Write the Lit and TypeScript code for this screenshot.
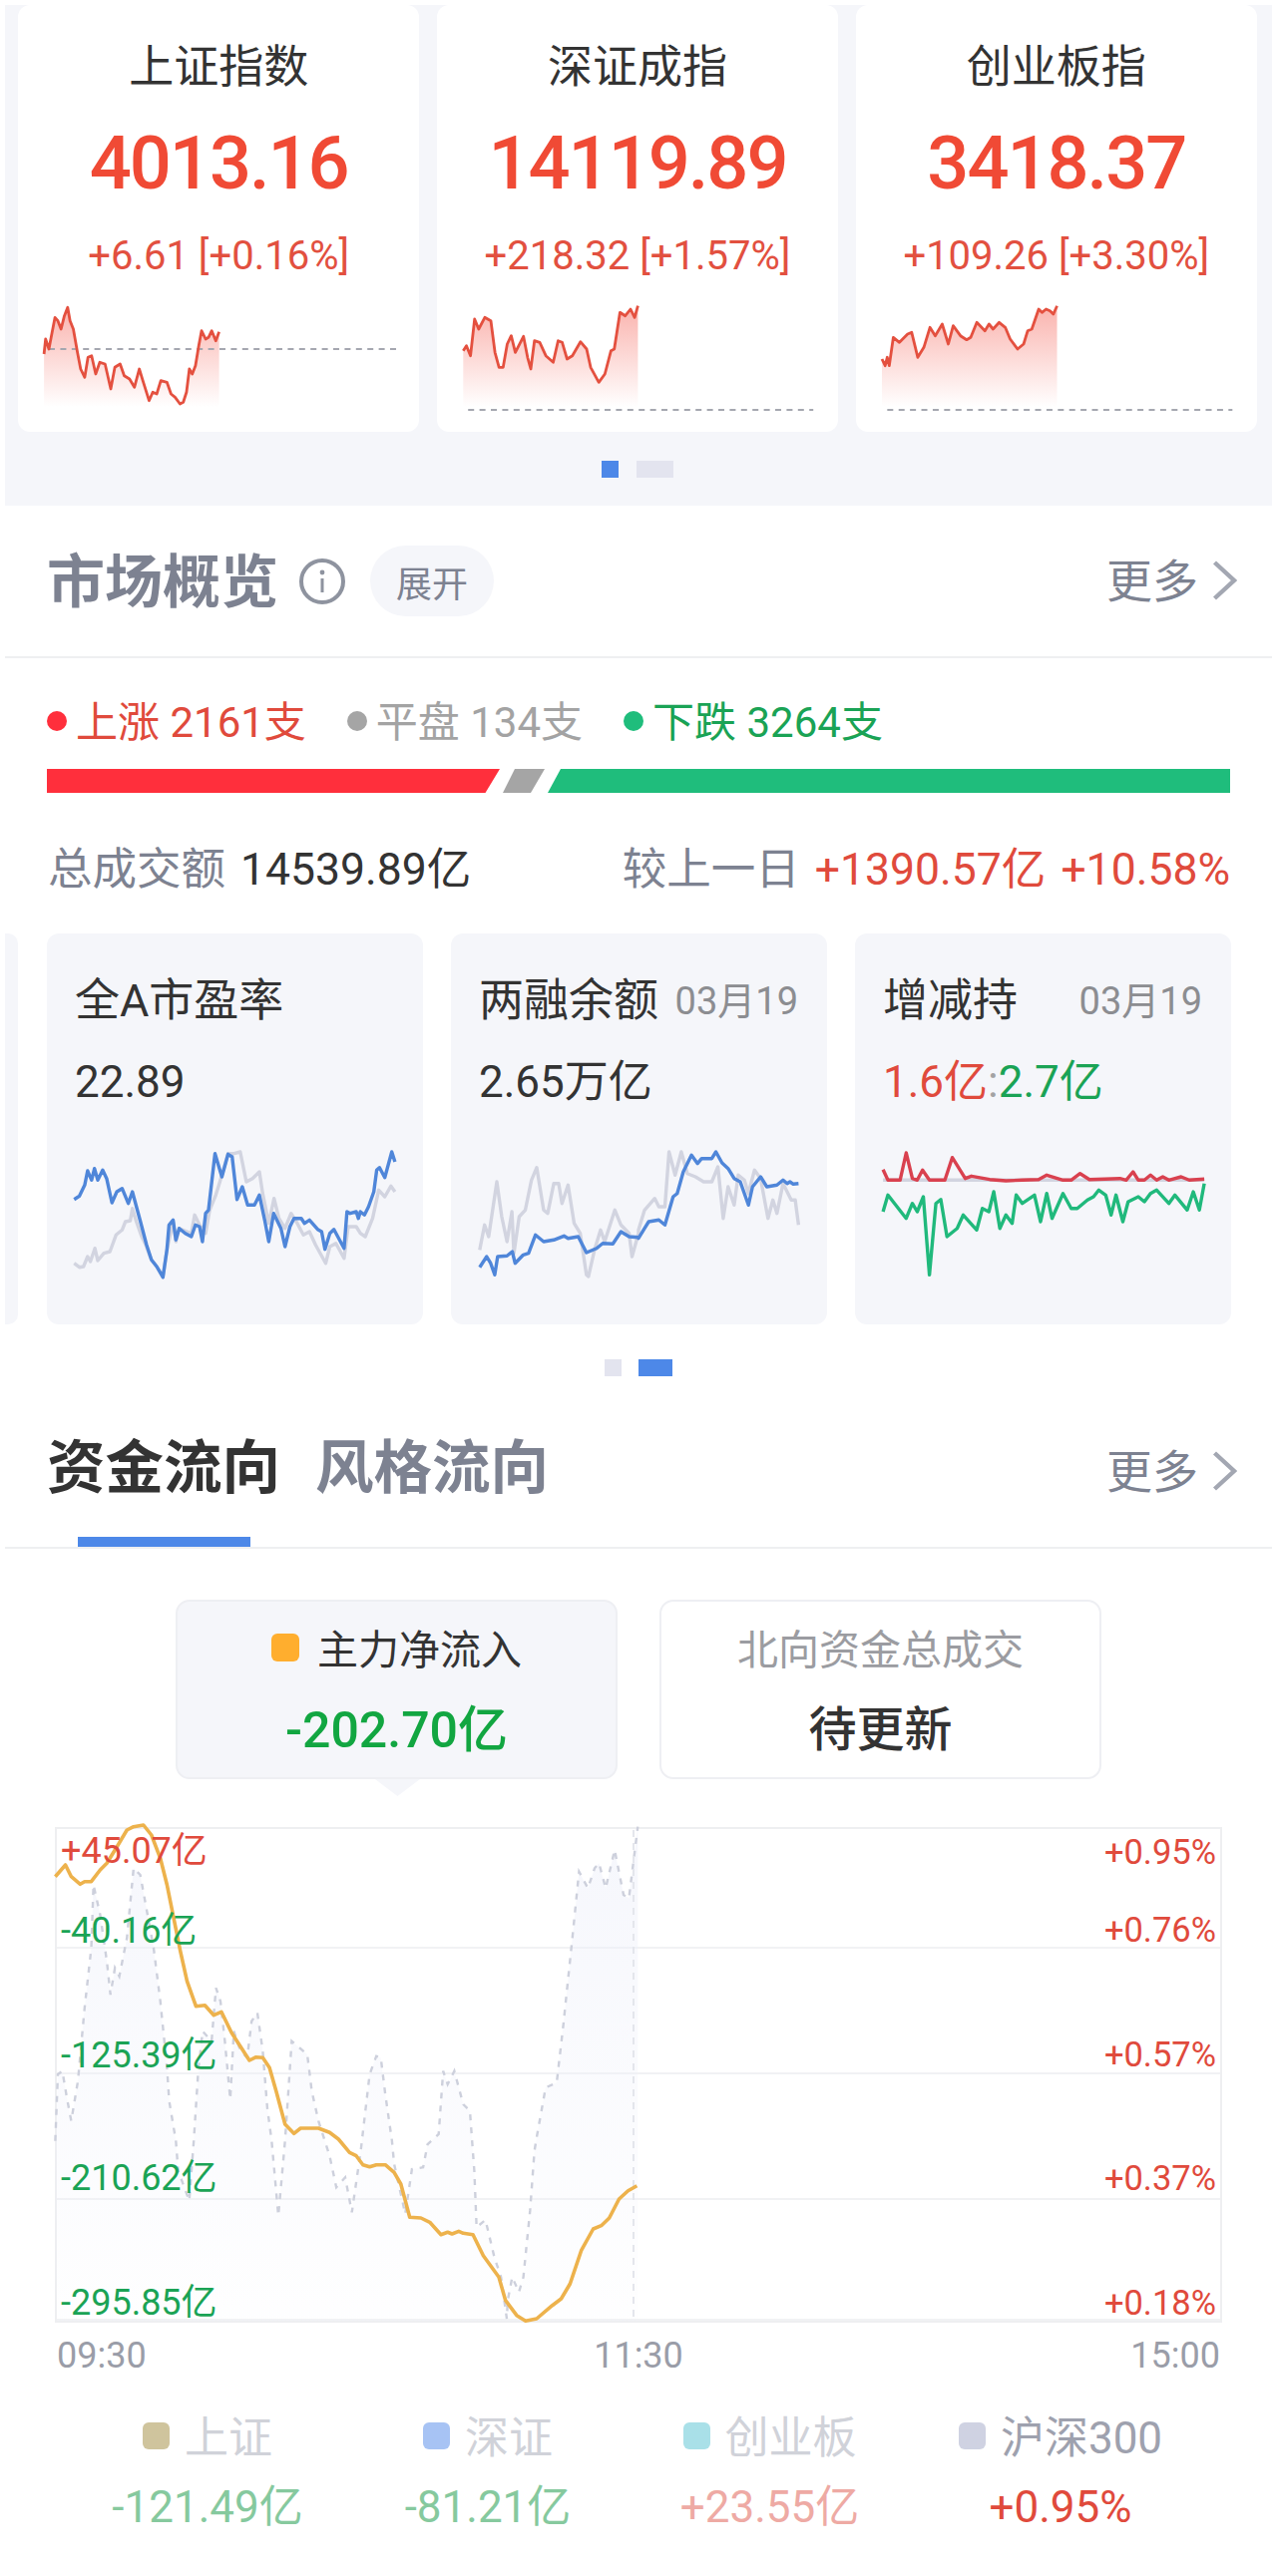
import { LitElement, html, css, svg } from "lit";
import { customElement } from "lit/decorators.js";

type P = [number, number];
const conv = (a: number[], sx: number, ox: number, sy: number, oy: number): P[] => {
  const r: P[] = [];
  for (let i = 0; i < a.length; i += 2) r.push([ox + a[i] / sx, oy + a[i + 1] / sy]);
  return r;
};
const str = (p: P[]) => p.map(([x, y]) => `${x.toFixed(1)},${y.toFixed(1)}`).join(" ");
const area = (p: P[], base: number) =>
  `${p[0][0].toFixed(1)},${base} ${str(p)} ${p[p.length - 1][0].toFixed(1)},${base}`;

const z = 1568 / 640;
const s1 = conv([108,1065,112,1020,120,1050,128,1000,135,955,142,965,150,990,158,950,166,925,172,965,180,990,190,1060,198,1110,208,1135,216,1075,225,1070,235,1125,245,1090,258,1095,272,1170,282,1105,295,1095,305,1130,318,1140,330,1165,342,1110,352,1150,366,1205,375,1180,385,1185,395,1145,410,1150,420,1185,430,1195,442,1215,450,1210,458,1180,465,1110,472,1125,480,1100,488,1040,495,995,505,1020,512,1015,520,995,530,1025,538,998], z, 0, 3, 0);
const s2 = conv([1137,1055,1145,1040,1155,1070,1165,960,1175,990,1190,955,1205,965,1215,1060,1225,1105,1235,1105,1245,1035,1255,1010,1265,1060,1285,1012,1295,1075,1303,1110,1312,1025,1325,1030,1340,1070,1358,1090,1370,1025,1380,1030,1392,1080,1405,1070,1425,1028,1440,1050,1450,1105,1470,1150,1485,1125,1500,1055,1508,1050,1522,940,1535,950,1548,930,1558,955,1566,920], z, 0, 3, 0);
const s3 = conv([597,1080,605,1100,610,1075,615,1100,625,1015,640,1030,660,1005,670,1000,685,1075,700,1045,715,985,728,1010,745,975,760,1035,772,980,790,1010,805,1022,815,1015,830,970,850,995,860,975,870,990,885,970,900,985,912,1020,930,1050,945,1035,955,995,965,990,982,930,990,940,1000,930,1010,935,1018,945,1027,920], z, 640, 3, 0);

const c1b = conv([182,848,195,838,208,805,215,762,225,790,232,755,240,790,252,760,262,785,275,858,287,825,300,815,315,860,325,825,345,915,360,985,372,1030,385,1050,400,1082,410,1000,415,925,425,910,432,970,440,935,455,950,470,960,480,925,490,930,497,975,505,890,512,880,528,710,545,780,560,712,570,720,582,848,595,810,608,865,625,865,637,835,650,910,660,975,672,890,690,935,700,990,712,930,722,905,740,905,748,920,760,910,780,938,790,945,798,998,810,950,820,938,845,995,852,885,860,890,875,885,880,905,885,885,895,895,905,870,918,825,925,760,932,752,945,782,962,705,970,735], z, 0, 3, 920);
const c1g = conv([182,1040,195,1052,205,1050,215,1020,222,1035,233,995,240,1032,255,1010,270,1005,285,955,300,940,308,915,320,912,325,875,335,915,348,960,358,985,372,1030,385,1050,400,1082,410,1000,425,915,432,975,440,935,470,950,478,895,490,925,505,950,515,880,530,835,540,795,560,710,575,710,590,705,605,795,620,785,637,765,645,830,660,920,673,845,685,905,700,935,715,890,730,920,745,955,760,945,775,985,800,1040,810,990,825,980,845,1025,855,930,875,930,885,950,897,960,915,905,930,820,945,840,960,808,970,825], z, 0, 3, 920);
const c2b = [...conv([1178,1052,1195,1020,1205,1040,1215,1075,1222,1020,1245,1018,1258,1005,1265,1040,1285,1015,1298,1010,1315,955,1335,975,1360,970,1385,958,1395,965,1420,960,1440,1008,1465,995,1480,980,1505,982,1525,945,1545,960,1568,962], z, 0, 3, 920),
  ...conv([0,965,15,935,25,915,50,910,65,925,85,840,95,830,110,765,130,715,145,740,155,725,180,725,190,705,205,738,220,755,235,785,250,795,270,865,280,810,300,780,315,810,340,805,355,790,365,800,372,795,380,802,393,800], z, 640, 3, 920)];
const c2g = [...conv([1178,1000,1190,925,1200,960,1220,795,1232,900,1245,975,1257,885,1262,1010,1275,900,1290,880,1305,790,1318,752,1335,880,1345,890,1360,800,1372,800,1380,860,1395,805,1410,920,1425,950,1440,1075,1445,1080,1460,1000,1475,940,1485,975,1510,880,1525,925,1545,950,1552,1020,1568,950], z, 0, 3, 920),
  ...conv([0,940,15,880,40,845,50,870,65,870,75,705,90,775,105,705,120,770,140,780,160,795,180,795,195,750,208,905,220,810,235,865,245,775,260,790,270,830,285,760,300,785,318,905,330,850,340,890,355,800,375,850,385,850,393,925], z, 640, 3, 920)];
const c3r = conv([598,758,610,790,640,790,655,708,670,785,682,790,695,760,712,790,750,790,768,722,800,785,815,778,860,788,900,792,940,790,980,788,1000,775,1040,790,1060,790,1082,770,1105,788,1180,785,1195,790,1212,765,1225,790,1240,790,1255,775,1270,790,1285,780,1300,790,1330,780,1350,790,1387,787], z, 640, 3, 920);
const c3y = conv([598,885,610,835,655,905,670,860,682,885,697,840,712,1075,728,860,740,848,755,960,780,935,795,895,828,940,842,875,858,885,870,825,885,935,900,895,915,920,925,835,940,860,970,835,985,915,1000,830,1013,905,1040,830,1060,875,1075,875,1100,850,1115,840,1128,820,1145,835,1158,895,1170,835,1187,915,1200,855,1225,840,1240,855,1255,830,1270,820,1300,860,1315,835,1345,880,1360,825,1375,880,1387,800], z, 640, 3, 920);
const c3f = conv([598,790,1387,790], z, 640, 3, 920);

const y7 = 1568 / 700;
const a = (arr: number[]) => conv(arr, y7, 0, 3, 1780);
const b = (arr: number[]) => conv(arr, y7, 0, 3, 2150);
const orange = [...a([124,305,147,270,160,305,180,328,190,320,205,320,225,285,240,265,265,210,285,165,300,155,322,150,340,180,360,250,375,330,390,430,405,530,420,620,440,695,460,692,480,722,497,712,520,775,560,858,575,848,590,850,605,880,620,950,640,1050,660,1078,675,1062,715,1062,740,1075,760,1095,785,1135,800,1145,815,1172,830,1178,845,1172,865,1172,885,1195]),
  ...b([900,120,920,220,945,222,965,235,990,272,1005,265,1015,270,1030,262,1040,268,1062,272,1085,335,1120,400,1135,470,1160,515,1180,532,1205,525,1240,485,1260,465,1280,420,1305,320,1332,255,1350,245,1368,222,1390,165,1410,140,1430,125])];
const dashed = [...a([124,1100,130,900,140,890,150,970,160,1040,175,920,190,700,205,520,210,330,225,420,240,560,248,660,258,580,268,605,285,490,300,280,315,300,345,520,360,680,375,880,380,980,395,1100,400,1190]),
  ...b([425,170]),
  ...a([435,1100,445,890,455,770,475,800,485,640,495,680,505,800,517,975,525,770,540,830,555,850,565,740,578,715,590,830,600,1000,610,1100]),
  ...b([625,215]),
  ...a([640,1100,655,800,690,840,700,950,715,1040,740,1145]),
  ...b([755,130,775,100,790,205,810,20]),
  ...a([830,900,845,845,855,850,865,960,880,1100]),
  ...b([885,60,910,210,925,75,950,70,960,0]),
  ...a([985,1080,995,890,1005,930,1020,890,1040,990,1055,1010,1065,1190]),
  ...b([1070,250,1090,228,1110,340,1125,400,1138,525,1140,470,1150,400,1165,445,1175,400,1190,200,1200,20]),
  ...a([1205,1090,1225,940,1250,925,1265,750,1285,490,1300,290,1320,340,1335,280,1345,265,1360,340,1380,225,1400,360,1412,370,1432,155])];

const indices = [
  { name: "上证指数", val: "4013.16", delta: "+6.61 [+0.16%]", pts: s1, x: 18, dash: [49, 397, 350] },
  { name: "深证成指", val: "14119.89", delta: "+218.32 [+1.57%]", pts: s2, x: 437.8, dash: [469, 815, 411] },
  { name: "创业板指", val: "3418.37", delta: "+109.26 [+3.30%]", pts: s3, x: 857.7, dash: [889, 1235, 411] },
];
const leftLabels = [
  { t: "+45.07亿", y: 1855, c: "up" }, { t: "-40.16亿", y: 1935, c: "down" }, { t: "-125.39亿", y: 2060, c: "down" },
  { t: "-210.62亿", y: 2183, c: "down" }, { t: "-295.85亿", y: 2308, c: "down" },
];
const rightLabels = [
  { t: "+0.95%", y: 1856 }, { t: "+0.76%", y: 1934 }, { t: "+0.57%", y: 2059 }, { t: "+0.37%", y: 2183 }, { t: "+0.18%", y: 2308 },
];
const legend = [
  { n: "上证", v: "-121.49亿", sw: "#cfc49d", nc: "dim", vc: "dgreen" },
  { n: "深证", v: "-81.21亿", sw: "#a7c3f4", nc: "dim", vc: "dgreen" },
  { n: "创业板", v: "+23.55亿", sw: "#a9e0e8", nc: "dim", vc: "dred" },
  { n: "沪深300", v: "+0.95%", sw: "#cfd2e2", nc: "act", vc: "up" },
];

const chevron = html`<svg class="chev" viewBox="0 0 25 40"><path d="M2.5 2 L22 20 L2.5 38" fill="none" stroke="#a3a7b2" stroke-width="4.4"/></svg>`;

@customElement("app-root")
export class AppRoot extends LitElement {
  static styles = css`
    :host { display: block; width: 1280px; height: 2583px; background: #fff; overflow: hidden;
      font-family: Roboto, "Noto Sans CJK SC", sans-serif; color: #333; }
    svg { display: block; }
    .top { margin: 5px 5px 0; height: 502px; background: #f5f6fa; padding: 0 15px 0 13px; box-sizing: border-box; }
    .cards { display: grid; grid-template-columns: repeat(3, 1fr); gap: 17.5px; }
    .card { background: #fff; border-radius: 12px; height: 428px; display: flex; flex-direction: column; align-items: center; }
    .cname { margin-top: 33px; font-size: 45px; line-height: 60px; color: #333; }
    .cval { margin-top: 26px; font-size: 74px; line-height: 80px; font-weight: 500; letter-spacing: -2px; color: #f04a35; }
    .cdelta { margin-top: 28px; font-size: 40px; line-height: 50px; color: #e2503f; }
    .spark { margin-top: 18px; width: 100%; height: 120px; }
    .dots { display: flex; justify-content: center; gap: 18px; }
    .dots i { display: block; height: 17px; }
    .dots-top { margin-top: 29px; }
    .on1 { width: 17px; background: #4d88e8; }
    .off2 { width: 37px; background: #e3e4ef; }
    .off1 { width: 17px; background: #e3e4ef; }
    .on2 { width: 34px; background: #4d88e8; }
    .head { margin: 0 5px; height: 153px; box-sizing: border-box; padding: 0 35px 0 42px; display: flex; align-items: center; border-bottom: 2px solid #eeeff1; }
    .h-title { font-size: 58px; line-height: 70px; font-weight: 700; color: #7d8291; padding-top: 2px; }
    .info { margin-left: 21px; width: 46px; height: 46px; }
    .pill { margin-left: 25px; width: 124px; height: 71px; border-radius: 36px; background: #f5f6fa; display: flex; align-items: center; justify-content: center; font-size: 36px; color: #7d8291; }
    .more { margin-left: auto; display: flex; align-items: center; gap: 14px; font-size: 46px; line-height: 60px; color: #7d8291; }
    .more span { padding-top: 3px; }
    .head .more { margin-top: -2px; }
    .chev { width: 25px; height: 40px; }
    .body { margin: 0 47px; }
    .ratio { margin-top: 41px; height: 48px; display: flex; align-items: center; font-size: 42px; line-height: 48px; }
    .ratio .dot { width: 20px; height: 20px; border-radius: 50%; margin-right: 9px; margin-top: -4px; }
    .ratio .item { display: flex; align-items: center; margin-right: 41px; }
    .bar { margin-top: 22px; width: 1186px; height: 24px; }
    .total { margin-top: 52px; display: flex; justify-content: space-between; align-items: center; font-size: 44.5px; line-height: 50px; padding-left: 1px; }
    .total > div { display: flex; gap: 15px; }
    .lab { color: #7d8291; }
    .up { color: #e04a3c; }
    .down { color: #1aa355; }
    .flat { color: #a3a3a3; }
    .row { margin: 39px 5px 0; display: flex; height: 392px; }
    .sliver { flex: none; width: 13px; background: #f5f6fa; border-radius: 0 10px 10px 0; margin-right: 29px; }
    .mini { flex: none; width: 377px; margin-right: 28px; background: #f5f6fa; border-radius: 12px; box-sizing: border-box; padding-top: 38px; }
    .mini:last-child { margin-right: 0; }
    .mhead { display: flex; justify-content: space-between; padding: 0 29px 0 28px; font-size: 45px; line-height: 60px; color: #333; }
    .date { font-size: 38px; color: #8c8d91; }
    .mval { margin-top: 21px; padding: 0 28px; font-size: 44px; line-height: 60px; color: #333; }
    .mval .sep { color: #a3a3a3; }
    .mchart { margin-top: 35px; width: 377px; height: 140px; }
    .dots-mid { margin-top: 35px; gap: 17px; }
    .tabs { margin: 0 5px; height: 173px; box-sizing: border-box; padding: 0 35px 0 42px; display: flex; border-bottom: 2px solid #eeeff1; }
    .tab { display: flex; flex-direction: column; align-items: center; padding-top: 57px; font-size: 58.5px; line-height: 70px; font-weight: 700; color: #7d8291; margin-right: 35px; }
    .tab.active { color: #333; }
    .tab.active::after { content: ""; display: block; margin-top: 34px; width: 173px; height: 10px; background: #4d88e8; }
    .tabs .more { align-self: flex-start; margin-top: 63px; }
    .sel { margin: 51px 0 0 176px; display: flex; gap: 42px; }
    .scard { position: relative; width: 443px; height: 180px; box-sizing: border-box; border: 2px solid #eeeff3; border-radius: 14px; display: flex; flex-direction: column; align-items: center; padding-top: 19px; }
    .scard.active { background: #f5f6fa; }
    .scard.active::after { content: ""; position: absolute; left: 198px; bottom: -19px; width: 45px; height: 17px; background: #f5f6fa; clip-path: polygon(0 0, 100% 0, 50% 100%); }
    .sname { display: flex; align-items: center; gap: 18px; font-size: 41px; line-height: 60px; color: #333; }
    .sname.muted { color: #9b9ca1; }
    .sq { width: 28px; height: 28px; border-radius: 6px; background: #ffae2e; margin-top: -6px; }
    .sval { margin-top: 20px; font-size: 48px; line-height: 60px; font-weight: 500; }
    .sval.green { font-size: 50px; color: #12a641; }
    .chart { position: relative; margin: 48px 0 0 55px; width: 1170px; height: 497px; box-sizing: border-box; border: 2px solid #eeeff1; display: grid; grid-template-rows: 120px 126px 126px 1fr; }
    .gl { border-bottom: 2px solid #f1f2f4; }
    .gl:last-of-type { border-bottom: 0; }
    .plot { position: absolute; left: -2px; top: -14px; width: 1170px; height: 510px; overflow: visible; }
    .lb { position: absolute; font-size: 36px; line-height: 44px; }
    .lb.l { left: 4px; }
    .lb.r { right: 4px; font-size: 34.5px; }
    .axis { margin: 10px 0 0 57px; width: 1166px; display: flex; justify-content: space-between; font-size: 36px; line-height: 46px; color: #9a9da8; }
    .leg { margin: 32px 0 0 66px; display: grid; grid-template-columns: 284px 278px 287px 296px; }
    .lc { display: flex; flex-direction: column; align-items: center; }
    .ln { display: flex; align-items: center; gap: 15px; font-size: 44px; line-height: 56px; }
    .ln i { display: block; width: 27px; height: 27px; border-radius: 6px; margin-top: -6px; }
    .dim { color: #d0d2d9; }
    .act { color: #9ea1ae; }
    .lv { margin-top: 16px; font-size: 44px; line-height: 50px; }
    .dgreen { color: #86c99e; }
    .dred { color: #eeaaa4; }
  `;

  private mini(x: number, lines: { p: P[]; c: string; w?: number }[]) {
    return html`<svg class="mchart" viewBox="${x} 1150 377 140">
      ${lines.map(l => svg`<polyline points=${str(l.p)} fill="none" stroke=${l.c} stroke-width=${l.w ?? 3.4} stroke-linejoin="round"/>`)}
    </svg>`;
  }

  render() {
    return html`
      <section class="top">
        <div class="cards">
          ${indices.map((c, i) => html`
            <div class="card">
              <div class="cname">${c.name}</div>
              <div class="cval">${c.val}</div>
              <div class="cdelta">${c.delta}</div>
              <svg class="spark" viewBox="${c.x} 300 402.3 120">
                <defs><linearGradient id="g${i}" x1="0" y1="0" x2="0" y2="1">
                  <stop offset="0" stop-color="#f4564a" stop-opacity=".45"/><stop offset="1" stop-color="#f4564a" stop-opacity="0"/>
                </linearGradient></defs>
                <polygon points=${area(c.pts, 408)} fill="url(#g${i})"/>
                <line x1=${c.dash[0]} x2=${c.dash[1]} y1=${c.dash[2]} y2=${c.dash[2]} stroke="#a5a7b0" stroke-width="2" stroke-dasharray="6 5.4"/>
                <polyline points=${str(c.pts)} fill="none" stroke="#e4503f" stroke-width="2.8" stroke-linejoin="round"/>
              </svg>
            </div>`)}
        </div>
        <div class="dots dots-top"><i class="on1"></i><i class="off2"></i></div>
      </section>

      <header class="head">
        <div class="h-title">市场概览</div>
        <svg class="info" viewBox="0 0 46 46"><circle cx="23" cy="23" r="21" fill="none" stroke="#8e939f" stroke-width="4"/><circle cx="23" cy="14" r="2.4" fill="#8e939f"/><rect x="21.5" y="20" width="3" height="14" fill="#8e939f"/></svg>
        <div class="pill">展开</div>
        <div class="more"><span>更多</span>${chevron}</div>
      </header>

      <section class="body">
        <div class="ratio">
          <div class="item up"><span class="dot" style="background:#ff2f3c"></span>上涨 2161支</div>
          <div class="item flat"><span class="dot" style="background:#a5a5a5"></span>平盘 134支</div>
          <div class="item down"><span class="dot" style="background:#1fbd7c"></span>下跌 3264支</div>
        </div>
        <svg class="bar" viewBox="47 771 1186 24">
          <polygon points="47,771 501,771 486.5,795 47,795" fill="#ff2f3c"/>
          <polygon points="516,771 546,771 532,795 504,795" fill="#a5a5a5"/>
          <polygon points="562,771 1233,771 1233,795 549,795" fill="#1fbd7c"/>
        </svg>
        <div class="total">
          <div><span class="lab">总成交额</span><span>14539.89亿</span></div>
          <div><span class="lab">较上一日</span><span class="up">+1390.57亿</span><span class="up">+10.58%</span></div>
        </div>
      </section>

      <section class="row">
        <div class="sliver"></div>
        <div class="mini">
          <div class="mhead"><span>全A市盈率</span></div>
          <div class="mval">22.89</div>
          ${this.mini(47, [{ p: c1g, c: "#d2d4e0" }, { p: c1b, c: "#4f86d9" }])}
        </div>
        <div class="mini">
          <div class="mhead"><span>两融余额</span><span class="date">03月19</span></div>
          <div class="mval">2.65万亿</div>
          ${this.mini(452, [{ p: c2g, c: "#d2d4e0" }, { p: c2b, c: "#4f86d9" }])}
        </div>
        <div class="mini">
          <div class="mhead"><span>增减持</span><span class="date">03月19</span></div>
          <div class="mval"><span class="up">1.6亿</span><span class="sep">:</span><span class="down">2.7亿</span></div>
          ${this.mini(856, [{ p: c3f, c: "#d2d4e0" }, { p: c3r, c: "#d9414f" }, { p: c3y, c: "#20b97c" }])}
        </div>
      </section>
      <div class="dots dots-mid"><i class="off1"></i><i class="on2"></i></div>

      <nav class="tabs">
        <div class="tab active">资金流向</div>
        <div class="tab">风格流向</div>
        <div class="more"><span>更多</span>${chevron}</div>
      </nav>

      <div class="sel">
        <div class="scard active">
          <div class="sname"><span class="sq"></span>主力净流入</div>
          <div class="sval green">-202.70亿</div>
        </div>
        <div class="scard">
          <div class="sname muted">北向资金总成交</div>
          <div class="sval">待更新</div>
        </div>
      </div>

      <div class="chart">
        <div class="gl"></div><div class="gl"></div><div class="gl"></div><div class="gl"></div>
        <svg class="plot" viewBox="55 1820 1170 510">
          <defs><linearGradient id="gf" x1="0" y1="0" x2="0" y2="1">
            <stop offset="0" stop-color="#eef0fa" stop-opacity=".55"/><stop offset="1" stop-color="#eef0fa" stop-opacity=".05"/>
          </linearGradient></defs>
          <polygon points=${area(dashed, 2328)} fill="url(#gf)"/>
          <polyline points=${str(dashed)} fill="none" stroke="#cdd0dc" stroke-width="2.4" stroke-dasharray="6 7"/>
          <line x1="635" x2="635" y1="1835" y2="2327" stroke="#e4e6ec" stroke-width="2" stroke-dasharray="7 6"/>
          <polyline points=${str(orange)} fill="none" stroke="#edb24c" stroke-width="3.6" stroke-linejoin="round"/>
        </svg>
        ${leftLabels.map(l => html`<div class="lb l ${l.c}" style="top:${l.y - 1834 - 21}px">${l.t}</div>`)}
        ${rightLabels.map(l => html`<div class="lb r up" style="top:${l.y - 1834 - 21}px">${l.t}</div>`)}
      </div>

      <div class="axis"><span>09:30</span><span>11:30</span><span>15:00</span></div>

      <div class="leg">
        ${legend.map(l => html`
          <div class="lc">
            <div class="ln ${l.nc}"><i style="background:${l.sw}"></i>${l.n}</div>
            <div class="lv ${l.vc}">${l.v}</div>
          </div>`)}
      </div>
    `;
  }
}
